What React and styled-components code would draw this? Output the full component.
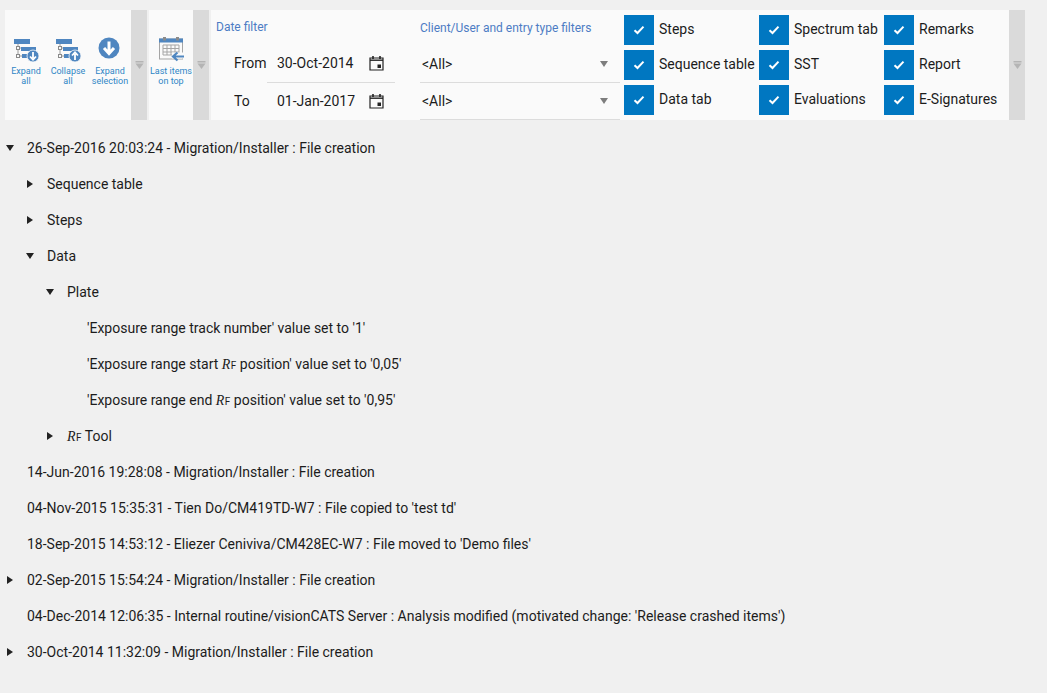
import React from "react";
import styled, { createGlobalStyle } from "styled-components";

const Global = createGlobalStyle`
  html, body { margin: 0; padding: 0; background: #f0f0f0; }
  body { width: 1047px; height: 693px; overflow: hidden; font-family: Roboto, "Liberation Sans", sans-serif; color: #1c1c1c; font-size: 14px; }
`;
const Page = styled.div`
  padding: 10px 0 0 5px;
`;
const Toolbar = styled.div`
  display: flex;
  height: 110px;
  gap: 2px;
`;
const Group = styled.div`
  display: flex;
  background: #fafafa;
`;
const Buttons = styled.div`
  width: ${(p) => p.$w}px;
  display: flex;
  padding-top: 27px;
  box-sizing: border-box;
`;
const ToolButton = styled.div`
  width: ${(p) => p.$w}px;
  display: flex;
  flex-direction: column;
  align-items: center;
`;
const ToolIcon = styled.svg`
  width: 26px;
  height: 26px;
  display: block;
  flex: none;
`;
const ToolLabel = styled.div`
  font-size: 9px;
  line-height: 10px;
  color: #2f86c6;
  text-align: center;
  margin-top: 3px;
  white-space: nowrap;
`;
const Collapser = styled.div`
  width: 16px;
  background: #dadada;
  display: flex;
  align-items: center;
  justify-content: center;
`;
const FilterPanel = styled(Group)`
  width: 798px;
  position: relative;
`;
const DateCol = styled.div`
  width: 209px;
  flex: none;
  box-sizing: border-box;
  padding: 10px 0 0 5px;
`;
const GroupTitle = styled.div`
  font-size: 12px;
  line-height: 15px;
  color: #4d7cc4;
  white-space: nowrap;
`;
const DateRows = styled.div`
  margin-top: 10px;
`;
const DateRow = styled.div`
  display: flex;
  align-items: center;
  height: 38px;
`;
const DateLabel = styled.div`
  width: 51px;
  padding: 0 0 2px 18px;
  box-sizing: border-box;
  flex: none;
`;
const DateField = styled.div`
  width: 128px;
  height: 38px;
  box-sizing: border-box;
  display: flex;
  align-items: center;
  padding: 0 11px 2px 10px;
  justify-content: space-between;
  border-bottom: ${(p) => (p.$line ? "1px solid #dcdcdc" : "1px solid transparent")};
`;
const SelectCol = styled.div`
  width: 200px;
  flex: none;
  padding-top: 11px;
`;
const SelectRows = styled.div`
  margin-top: 10px;
`;
const Select = styled.div`
  height: 37px;
  box-sizing: border-box;
  border-bottom: 1px solid #dcdcdc;
  display: flex;
  align-items: center;
  justify-content: space-between;
  padding: 0 12px 0 2px;
`;
const Caret = styled.div`
  width: 0;
  height: 0;
  border-left: 4px solid transparent;
  border-right: 4px solid transparent;
  border-top: 6px solid #7d7d7d;
`;
const Checks = styled.div`
  display: grid;
  grid-template-columns: 135px 125px auto;
  grid-auto-rows: 30px;
  row-gap: 5px;
  padding: 5px 0 0 4px;
`;
const CheckItem = styled.div`
  display: flex;
  align-items: center;
  gap: 5px;
  white-space: nowrap;
`;
const CheckBox = styled.div`
  width: 30px;
  height: 30px;
  background: #0077c1;
  display: flex;
  align-items: center;
  justify-content: center;
  flex: none;
`;
const CheckLabel = styled.span`
  padding-bottom: 2px;
`;
const Tree = styled.div`
  padding-top: 10px;
`;
const Row = styled.div`
  height: 36px;
  display: flex;
  align-items: center;
  padding-left: ${(p) => p.$level * 20}px;
  white-space: nowrap;
`;
const Arrow = styled.span`
  width: 22px;
  flex: none;
  display: flex;
  align-items: center;
`;
const ExpandedArrow = styled.span`
  width: 0;
  height: 0;
  margin-left: 1px;
  border-left: 4px solid transparent;
  border-right: 4px solid transparent;
  border-top: 6px solid #222;
`;
const CollapsedArrow = styled.span`
  width: 0;
  height: 0;
  margin-left: 2px;
  border-top: 4px solid transparent;
  border-bottom: 4px solid transparent;
  border-left: 6px solid #222;
`;
const RfR = styled.i`
  font-family: "Liberation Serif", serif;
  font-size: 14px;
  margin-right: 0.5px;
`;
const RfF = styled.span`
  font-size: 10px;
`;

const Rf = () => (
  <>
    <RfR>R</RfR>
    <RfF>F</RfF>
  </>
);

const CollapseMark = () => (
  <svg width="9" height="9" viewBox="0 0 9 9">
    <rect x="0.5" y="0" width="8" height="1.5" fill="#b4b4b4" />
    <path d="M0.5 2.5h8L4.5 8z" fill="#b4b4b4" />
  </svg>
);

const Check = () => (
  <svg width="12" height="10" viewBox="0 0 12 10">
    <path d="M1.5 5.2 4.5 8 10.5 1.6" fill="none" stroke="#fff" strokeWidth="2" />
  </svg>
);

const Calendar = () => (
  <svg width="15" height="16" viewBox="0 0 15 16">
    <path d="M1 3h13v12H1z" fill="none" stroke="#222" strokeWidth="1.2" />
    <path d="M1 5.2h13" stroke="#222" strokeWidth="1.4" />
    <path d="M4 1v3M11 1v3" stroke="#222" strokeWidth="1.6" />
    <rect x="8.5" y="9.5" width="3.5" height="3.5" fill="#222" />
  </svg>
);

const TreeGlyph = ({ up }) => (
  <ToolIcon viewBox="0 0 26 26">
    <rect x="1" y="2" width="16" height="5" fill="#4f86c0" />
    <path d="M5 7v12M5 11h4M5 19h4" stroke="#9a9a9a" strokeWidth="1" fill="none" />
    <rect x="3.5" y="9.5" width="3" height="3" fill="#fafafa" stroke="#8a8a8a" />
    <rect x="3.5" y="17.5" width="3" height="3" fill="#fafafa" stroke="#8a8a8a" />
    <rect x="8" y="10" width="15" height="4" fill="#4f86c0" />
    <rect x="9" y="17" width="6" height="4" fill="#4f86c0" />
    <circle cx="20" cy="19" r="6" fill="#4f86c0" stroke="#fafafa" strokeWidth="0.8" />
    {up ? (
      <path d="M20 23v-6M17 18.5l3-3.2 3 3.2" stroke="#fff" strokeWidth="1.8" fill="none" />
    ) : (
      <path d="M20 15v6M17 19.5l3 3.2 3-3.2" stroke="#fff" strokeWidth="1.8" fill="none" />
    )}
  </ToolIcon>
);

const ExpandSel = () => (
  <ToolIcon viewBox="0 0 26 26">
    <circle cx="12" cy="11" r="10.5" fill="#4f86c0" />
    <path d="M12 4.5v11M7 11l5 5.5 5-5.5" stroke="#fff" strokeWidth="3" fill="none" />
  </ToolIcon>
);

const LastItems = () => (
  <ToolIcon viewBox="0 0 26 26">
    <rect x="1.5" y="2" width="23" height="20" fill="#fafafa" stroke="#a5a5a5" />
    <rect x="1" y="1.5" width="24" height="4" fill="#4f86c0" />
    <rect x="5" y="0" width="3" height="3.5" fill="#8a8a8a" />
    <rect x="18" y="0" width="3" height="3.5" fill="#8a8a8a" />
    <path d="M5 8h16v10H5zM5 11.5h16M5 15h16M9 8v10M13 8v10M17 8v10" stroke="#a5a5a5" strokeWidth="1" fill="none" />
    <path d="M14 15.5h12v6H14z" fill="#fafafa" />
    <path d="M26 19.5h-11M19.5 15.5l-4.5 4 4.5 4" stroke="#4f86c0" strokeWidth="2.2" fill="none" />
  </ToolIcon>
);

const CheckField = ({ children }) => (
  <CheckItem>
    <CheckBox>
      <Check />
    </CheckBox>
    <CheckLabel>{children}</CheckLabel>
  </CheckItem>
);

const checks = ["Steps", "Spectrum tab", "Remarks", "Sequence table", "SST", "Report", "Data tab", "Evaluations", "E-Signatures"];

const rows = [
  { l: 0, a: "d", t: "26-Sep-2016 20:03:24 - Migration/Installer : File creation" },
  { l: 1, a: "r", t: "Sequence table" },
  { l: 1, a: "r", t: "Steps" },
  { l: 1, a: "d", t: "Data" },
  { l: 2, a: "d", t: "Plate" },
  { l: 3, t: "'Exposure range track number' value set to '1'" },
  { l: 3, t: <>'Exposure range start <Rf /> position' value set to '0,05'</> },
  { l: 3, t: <>'Exposure range end <Rf /> position' value set to '0,95'</> },
  { l: 2, a: "r", t: <><Rf /> Tool</> },
  { l: 0, t: "14-Jun-2016 19:28:08 - Migration/Installer : File creation" },
  { l: 0, t: "04-Nov-2015 15:35:31 - Tien Do/CM419TD-W7 : File copied to 'test td'" },
  { l: 0, t: "18-Sep-2015 14:53:12 - Eliezer Ceniviva/CM428EC-W7 : File moved to 'Demo files'" },
  { l: 0, a: "r", t: "02-Sep-2015 15:54:24 - Migration/Installer : File creation" },
  { l: 0, t: "04-Dec-2014 12:06:35 - Internal routine/visionCATS Server : Analysis modified (motivated change: 'Release crashed items')" },
  { l: 0, a: "r", t: "30-Oct-2014 11:32:09 - Migration/Installer : File creation" },
];

export default function App() {
  return (
    <Page>
      <Global />
      <Toolbar>
        <Group>
          <Buttons $w={126}>
            <ToolButton $w={42}>
              <TreeGlyph />
              <ToolLabel>Expand<br />all</ToolLabel>
            </ToolButton>
            <ToolButton $w={42}>
              <TreeGlyph up />
              <ToolLabel>Collapse<br />all</ToolLabel>
            </ToolButton>
            <ToolButton $w={42}>
              <ExpandSel />
              <ToolLabel>Expand<br />selection</ToolLabel>
            </ToolButton>
          </Buttons>
          <Collapser><CollapseMark /></Collapser>
        </Group>
        <Group>
          <Buttons $w={44}>
            <ToolButton $w={44}>
              <LastItems />
              <ToolLabel>Last items<br />on top</ToolLabel>
            </ToolButton>
          </Buttons>
          <Collapser><CollapseMark /></Collapser>
        </Group>
        <Group>
          <FilterPanel>
            <DateCol>
              <GroupTitle>Date filter</GroupTitle>
              <DateRows>
                <DateRow>
                  <DateLabel>From</DateLabel>
                  <DateField $line>30-Oct-2014<Calendar /></DateField>
                </DateRow>
                <DateRow>
                  <DateLabel>To</DateLabel>
                  <DateField>01-Jan-2017<Calendar /></DateField>
                </DateRow>
              </DateRows>
            </DateCol>
            <SelectCol>
              <GroupTitle>Client/User and entry type filters</GroupTitle>
              <SelectRows>
                <Select>&lt;All&gt;<Caret /></Select>
                <Select>&lt;All&gt;<Caret /></Select>
              </SelectRows>
            </SelectCol>
            <Checks>
              {checks.map((c) => (
                <CheckField key={c}>{c}</CheckField>
              ))}
            </Checks>
          </FilterPanel>
          <Collapser><CollapseMark /></Collapser>
        </Group>
      </Toolbar>
      <Tree>
        {rows.map((r, i) => (
          <Row key={i} $level={r.l}>
            <Arrow>
              {r.a === "d" && <ExpandedArrow />}
              {r.a === "r" && <CollapsedArrow />}
            </Arrow>
            <span>{r.t}</span>
          </Row>
        ))}
      </Tree>
    </Page>
  );
}
